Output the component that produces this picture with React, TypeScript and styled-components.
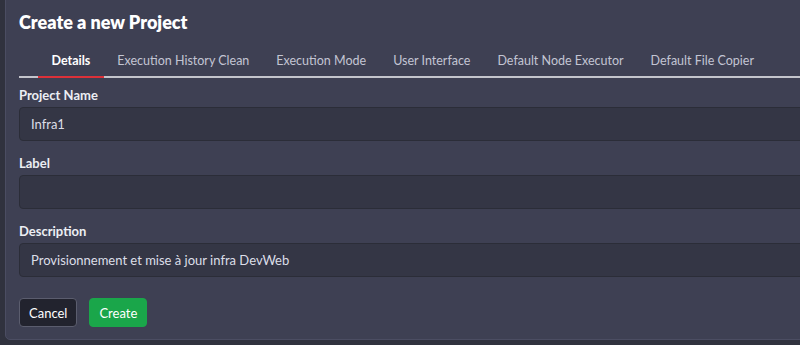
import styled, { createGlobalStyle } from 'styled-components';

const GlobalStyle = createGlobalStyle`
  html, body {
    margin: 0;
    padding: 0;
    background: #30323e;
    font-family: Lato, "Noto Sans", sans-serif;
    overflow: hidden;
  }
`

const Page = styled.div`
  width: 800px;
  height: 345px;
  padding-left: 5px;
  box-sizing: border-box;
  overflow: hidden;
`

const Panel = styled.div`
  width: 920px;
  margin-top: -6px;
  padding: 15px 0 12px 13px;
  background: #3e4053;
  border: 1px solid #4b4d62;
  border-radius: 5px;
  box-sizing: border-box;
`

const Title = styled.h2`
  margin: 0;
  font-size: 18px;
  font-weight: 800;
  line-height: 24px;
  color: #ffffff;
`

const TabBar = styled.div`
  display: flex;
  margin-top: 13px;
  padding-left: 19px;
  border-bottom: 2px solid #c4c5cc;
`

const Tab = styled.div<{ $active?: boolean }>`
  padding: 6px 13.5px 7px;
  margin-bottom: -2px;
  font-size: 12.5px;
  line-height: 16px;
  font-weight: ${p => (p.$active ? 700 : 400)};
  color: ${p => (p.$active ? '#ffffff' : '#c3c5d3')};
  border-bottom: 2px solid ${p => (p.$active ? '#dc3139' : 'transparent')};
  white-space: nowrap;
`

const Field = styled.div<{ $first?: boolean }>`
  display: flex;
  flex-direction: column;
  gap: 4px;
  margin-top: ${p => (p.$first ? '9px' : '14px')};
`

const Label = styled.label`
  font-size: 13px;
  font-weight: 700;
  line-height: 16px;
  color: #eceef4;
`

const Input = styled.div`
  height: 34px;
  box-sizing: border-box;
  padding: 0 11px;
  display: flex;
  align-items: center;
  background: #343645;
  border: 1px solid #2b2d38;
  border-radius: 4px;
  font-size: 13px;
  color: #dcdee8;
`

const Actions = styled.div`
  display: flex;
  gap: 12px;
  margin-top: 21px;
`

const Button = styled.button<{ $primary?: boolean }>`
  height: 29px;
  padding: 0 9px;
  border-radius: 4px;
  font-family: inherit;
  font-size: 13px;
  color: #ffffff;
  background: ${p => (p.$primary ? '#1aa64a' : '#22232e')};
  border: 1px solid ${p => (p.$primary ? '#1aa64a' : '#5b5d6e')};
  cursor: pointer;
`

const tabs = [
  'Details',
  'Execution History Clean',
  'Execution Mode',
  'User Interface',
  'Default Node Executor',
  'Default File Copier',
]

export default function App() {
  return (
    <>
      <GlobalStyle />
      <Page>
        <Panel>
          <Title>Create a new Project</Title>
          <TabBar>
            {tabs.map((t, i) => (
              <Tab key={t} $active={i === 0}>{t}</Tab>
            ))}
          </TabBar>
          <Field $first>
            <Label>Project Name</Label>
            <Input>Infra1</Input>
          </Field>
          <Field>
            <Label>Label</Label>
            <Input />
          </Field>
          <Field>
            <Label>Description</Label>
            <Input>Provisionnement et mise à jour infra DevWeb</Input>
          </Field>
          <Actions>
            <Button>Cancel</Button>
            <Button $primary>Create</Button>
          </Actions>
        </Panel>
      </Page>
    </>
  )
}
